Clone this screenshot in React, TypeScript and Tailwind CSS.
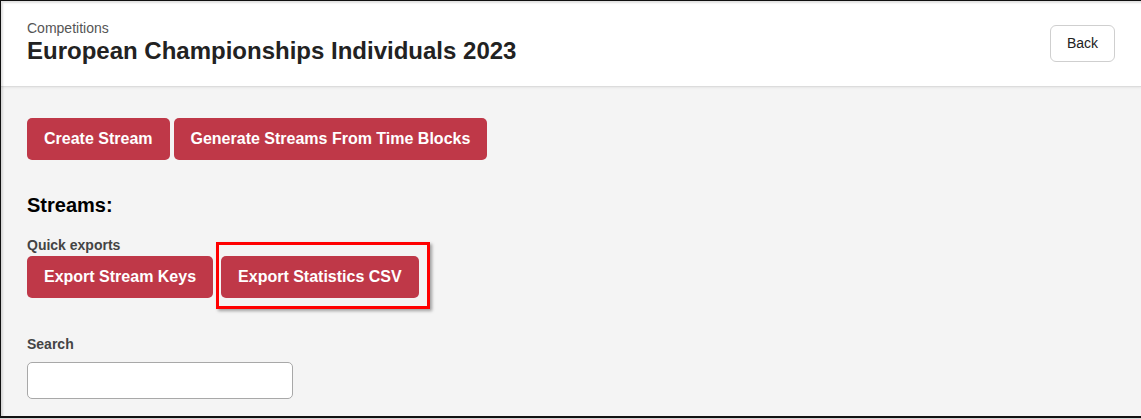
import React from "react";

const btn =
  "h-[42px] px-[17px] rounded-[5px] bg-[#bf3848] text-white text-[16px] font-bold leading-none whitespace-nowrap";

export default function App() {
  return (
    <div
      className="w-[1141px] h-[419px] flex flex-col overflow-hidden bg-[#f4f4f4]"
      style={{ fontFamily: '"Liberation Sans", Arial, sans-serif' }}
    >
      <div className="relative flex-1 flex flex-col border-l border-t border-[#111]">
        <div className="pointer-events-none absolute inset-0 shadow-[inset_2px_2px_2px_rgba(0,0,0,0.12)] z-10" />
        <header className="h-[86px] shrink-0 bg-white border-b border-[#dcdcdc] shadow-[0_1px_2px_rgba(0,0,0,0.06)] flex items-start justify-between pl-[26px] pr-[26px]">
          <div className="flex flex-col pt-[18px]">
            <div className="text-[14px] leading-[18px] text-[#555]">Competitions</div>
            <h1 className="text-[24px] leading-[28px] font-bold text-[#222]">
              European Championships Individuals 2023
            </h1>
          </div>
          <button className="self-center h-[37px] w-[65px] rounded-[6px] border border-[#cfcfcf] bg-white text-[14px] text-[#222]">
            Back
          </button>
        </header>

        <main className="flex-1 pl-[26px] pt-[31px]">
          <div className="flex gap-[4px]">
            <button className={btn}>Create Stream</button>
            <button className={btn}>Generate Streams From Time Blocks</button>
          </div>

          <h2 className="mt-[33px] text-[20px] leading-[24px] font-bold text-black">Streams:</h2>

          <div className="mt-[20px] text-[14px] leading-[16px] font-bold text-[#444]">Quick exports</div>
          <div className="mt-[3px] flex gap-[8px]">
            <button className={btn}>Export Stream Keys</button>
            <div className="relative">
              <button className={btn}>Export Statistics CSV</button>
              <div className="pointer-events-none absolute left-[-5px] top-[-14px] right-[-11px] bottom-[-11px] border-[3px] border-[#f00] shadow-[2px_2px_3px_rgba(0,0,0,0.35)]" />
            </div>
          </div>

          <div className="mt-[38px] text-[14px] leading-[16px] font-bold text-[#444]">Search</div>
          <input
            className="mt-[10px] block w-[266px] h-[37px] rounded-[5px] border border-[#a8a8a8] bg-white outline-none"
            type="text"
          />
        </main>
      </div>
      <div className="h-[2px] shrink-0 bg-[#111]" />
      <div className="h-[1px] shrink-0 bg-[#d4d4d4]" />
    </div>
  );
}
